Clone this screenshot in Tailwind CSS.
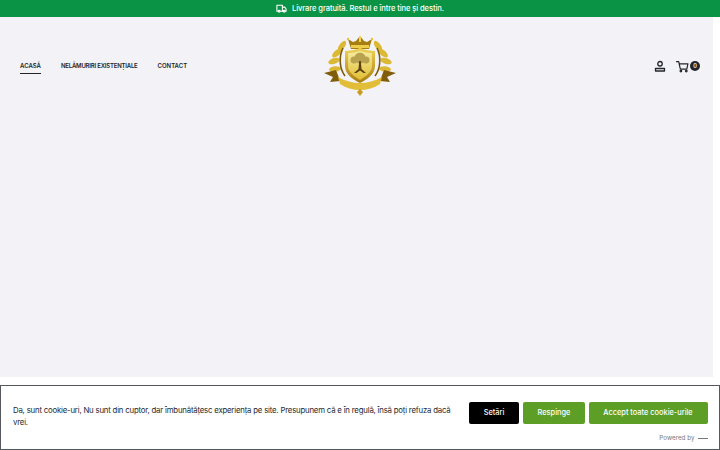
<!DOCTYPE html>
<html lang="ro">
<head>
    <meta charset="UTF-8">
    <meta name="viewport" content="width=device-width, initial-scale=1.0">
    <title>Acasă</title>
    <script src="https://cdn.jsdelivr.net/npm/@tailwindcss/browser@4"></script>
</head>
<body class="bg-white font-['Inter',sans-serif] h-[450px] overflow-hidden relative">
<div class="h-[17px] bg-[#0a9245] text-white flex items-center justify-center gap-[5px] text-[7.6px] tracking-[-0.1px] font-medium">
    <svg class="w-[11px] h-[11px]" viewBox="0 0 24 24" fill="none" stroke="currentColor" stroke-width="2.4" stroke-linejoin="round" stroke-linecap="round">
        <path d="M5 18H2V5h12v13H9"/>
        <path d="M14 9h5l3 4v5h-2M14 18h2"/>
        <circle cx="7" cy="18" r="2"/>
        <circle cx="18" cy="18" r="2"/>
    </svg>
    <span>Livrare gratuită. Restul e între tine și destin.</span>
</div>

<div class="w-[713px] h-[360px] bg-[#f3f2f7]">
    <header class="h-[98px] pl-5 pr-[13px] grid grid-cols-3 items-center">
        <nav class="flex items-start gap-5 text-[6px] font-semibold text-[#222529] pt-[3px]">
            <a class="border-b border-[#222529] pb-[3px]">ACASĂ</a>
            <a class="tracking-[-0.2px]">NELĂMURIRI EXISTENȚIALE</a>
            <a>CONTACT</a>
        </nav>
        <div class="flex justify-center">
            <svg class="w-[72px] h-[60px] blur-[0.4px]" viewBox="0 0 72 60">
                <defs>
                    <linearGradient id="gold" x1="0" y1="0" x2="0" y2="1">
                        <stop offset="0" stop-color="#f0d257"/>
                        <stop offset="1" stop-color="#a87e0e"/>
                    </linearGradient>
                    <linearGradient id="field" x1="0" y1="0" x2="0" y2="1">
                        <stop offset="0" stop-color="#f6ec9f"/>
                        <stop offset="1" stop-color="#e0bd35"/>
                    </linearGradient>
                </defs>
                <!-- laurels -->
                <g fill="#dcb935">
                    <ellipse cx="18" cy="10" rx="2.8" ry="6" transform="rotate(35 18 10)"/>
                    <ellipse cx="13" cy="17" rx="2.8" ry="6" transform="rotate(50 13 17)"/>
                    <ellipse cx="10" cy="25" rx="2.8" ry="6" transform="rotate(70 10 25)"/>
                    <ellipse cx="11" cy="33" rx="2.8" ry="6" transform="rotate(85 11 33)"/>
                    <ellipse cx="54" cy="10" rx="2.8" ry="6" transform="rotate(-35 54 10)"/>
                    <ellipse cx="59" cy="17" rx="2.8" ry="6" transform="rotate(-50 59 17)"/>
                    <ellipse cx="62" cy="25" rx="2.8" ry="6" transform="rotate(-70 62 25)"/>
                    <ellipse cx="61" cy="33" rx="2.8" ry="6" transform="rotate(-85 61 33)"/>
                </g>
                <path d="M19 12c-4 8-4 20 2 28M53 12c4 8 4 20-2 28" stroke="#7a5a0c" stroke-width="1.6" fill="none"/>
                <!-- crown -->
                <path d="M24 3l5 3 3-1 4-5 4 5 3 1 5-3-3 10H27z" fill="#a67d10"/>
                <path d="M35 0h2v6h-2z" fill="#f0d257"/>
                <circle cx="24" cy="3" r="1.2" fill="#e6c243"/>
                <circle cx="48" cy="3" r="1.2" fill="#e6c243"/>
                <path d="M27 9h18v3H27z" fill="#edcd4c"/>
                <!-- shield -->
                <path d="M21 15c5 0 10-1 15-3 5 2 10 3 15 3v15c0 8-7 13-15 17-8-4-15-9-15-17z" fill="url(#gold)"/>
                <path d="M24 17c4 0 8-1 12-2 4 1 8 2 12 2v13c0 6-6 10-12 14-6-4-12-8-12-14z" fill="url(#field)"/>
                <!-- tree -->
                <circle cx="36" cy="22" r="5.5" fill="#b8a24f"/>
                <circle cx="30" cy="24" r="3.5" fill="#b8a24f"/>
                <circle cx="42" cy="24" r="3.5" fill="#b8a24f"/>
                <path d="M35.2 25h1.6l.7 8 4.5 4h-2.5l-3.500-2.500-3.500 2.500h-2.500l4.500-4z" fill="#5d4310"/>
                <!-- ribbon -->
                <path d="M0 37l12-3 3 8c7 5 14 8 21 8s14-3 21-8l3-8 12 3-9 4 3 5-10-1c-6 5-13 8-20 8s-14-3-20-8l-10 1 3-5z" fill="#7f5d0a"/>
                <path d="M14 41c7 4 15 6 22 6s15-2 22-6l-2 7c-6 4-13 6-20 6s-14-2-20-6z" fill="#e2bd38"/>
                <path d="M36 53l3 3-3 4-3-4z" fill="#c79a1e"/>
            </svg>
        </div>
        <div class="flex items-center justify-end text-[#222529]">
            <svg class="w-[12px] h-[12px] mr-[10.5px]" viewBox="0 0 24 24" fill="none" stroke="currentColor" stroke-width="2.6" stroke-linejoin="round">
                <circle cx="12" cy="7.5" r="4.5"/>
                <path d="M3 17h18v5H3z"/>
            </svg>
            <svg class="w-[13px] h-[13px]" viewBox="0 0 24 24" fill="none" stroke="currentColor" stroke-width="2.2" stroke-linejoin="round" stroke-linecap="round">
                <path d="M1 3h4l3 14h12l2-10H6"/>
                <circle cx="9" cy="20.5" r="1.5"/>
                <circle cx="19" cy="20.5" r="1.5"/>
            </svg>
            <span class="w-[10px] h-[10px] ml-[1px] rounded-full bg-[#222529] text-white text-[5.5px] font-semibold flex items-center justify-center">0</span>
        </div>
    </header>
</div>

<div class="absolute left-0 right-0 bottom-0 h-[65px] bg-white border border-[#55585c] pl-3 pr-[11.5px] flex items-start justify-between">
    <p class="w-[444px] mt-[17.5px] text-[7.8px] tracking-[-0.2px] leading-[12px] text-[#26292d]">Da, sunt cookie-uri, Nu sunt din cuptor, dar îmbunătățesc experiența pe site. Presupunem că e în regulă, însă poți refuza dacă vrei.</p>
    <div class="mt-[15.5px] flex flex-col items-end">
        <div class="flex text-[7.4px] font-medium text-white">
            <button class="w-[50px] h-[22px] bg-black rounded-[2px]">Setări</button>
            <button class="w-[62px] h-[22px] ml-1 bg-[#5d9e27] rounded-[2px]">Respinge</button>
            <button class="w-[119px] h-[22px] ml-[3.5px] bg-[#5d9e27] rounded-[2px]">Accept toate cookie-urile</button>
        </div>
        <div class="mt-[10px] flex items-center gap-[3px] text-[6.3px] text-[#777]">
            <span>Powered by</span>
            <span class="w-[10px] h-px bg-[#777]"></span>
        </div>
    </div>
</div>
</body>
</html>
